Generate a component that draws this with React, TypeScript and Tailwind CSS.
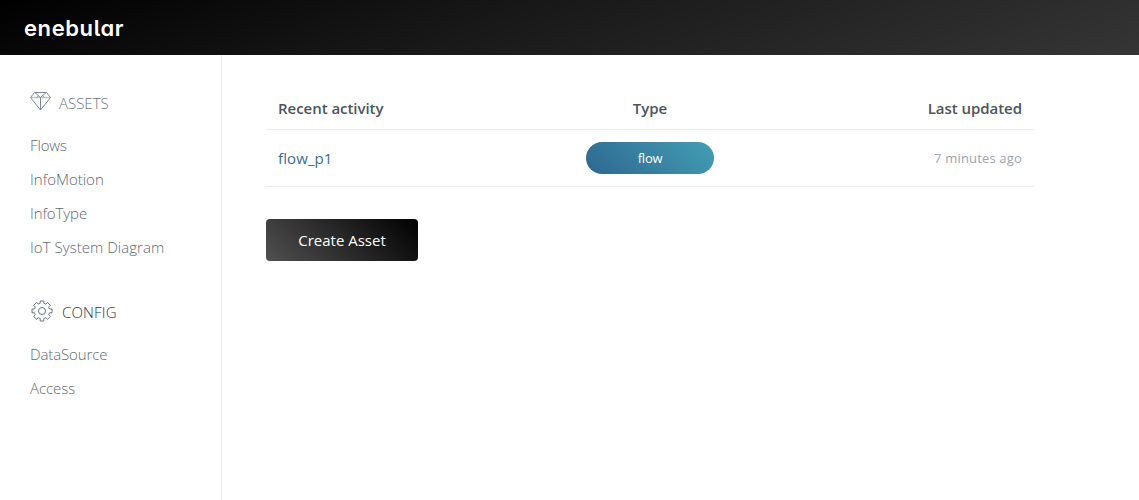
import type { ReactNode } from 'react';

type NavItem = { label: string; spacing: string };

const assetItems: NavItem[] = [
  { label: 'Flows', spacing: 'tracking-[-0.15px]' },
  { label: 'InfoMotion', spacing: 'tracking-[0px]' },
  { label: 'InfoType', spacing: 'tracking-[-0.1px]' },
  { label: 'IoT System Diagram', spacing: 'tracking-[0.04px]' },
];

const configItems: NavItem[] = [
  { label: 'DataSource', spacing: 'tracking-[-0.13px]' },
  { label: 'Access', spacing: 'tracking-[-0.07px]' },
];

function DiamondIcon() {
  return (
    <svg width="21" height="20" viewBox="0 0 21 20" fill="none" stroke="#7d8794" strokeWidth="1" strokeLinejoin="round">
      <path d="M.5 6.500h20" stroke="#bcc0c8" strokeWidth="1.400" />
      <path d="M4.500 1.500h12l4 5-10 12.500L.5 6.500z" />
      <path d="M4.800 1.500l5.700 5 5.700-5M10.500 6.500V19" />
      <path d="M6.500 6.500l2-2M14.500 6.500l-2-2" strokeWidth="0.7" />
    </svg>
  );
}

function GearIcon() {
  return (
    <svg width="22" height="22" viewBox="0 0 22 22" fill="none" stroke="#5b6675" strokeWidth="0.9" strokeLinejoin="round">
      <circle cx="11" cy="11" r="3.500" />
      <path d="M9.200 1h3.600v2.300l2 .8 1.700-1.600 2.800 2.800-1.600 1.700.8 2H21v3.800h-2.500l-.8 2 1.600 1.700-2.800 2.800-1.700-1.600-2 .8V21H9.200v-2.500l-2-.8-1.700 1.600-2.800-2.800 1.600-1.700-.8-2H1V9h2.500l.8-2-1.600-1.700 2.800-2.800 1.700 1.600 2-.8z" />
    </svg>
  );
}

function NavList({ items }: { items: NavItem[] }) {
  return (
    <ul className="text-[15px] font-light text-[#5f6873]">
      {items.map((item) => (
        <li key={item.label} className={`flex h-[34px] items-center whitespace-nowrap ${item.spacing}`}>
          {item.label}
        </li>
      ))}
    </ul>
  );
}

function NavHeading({ icon, children }: { icon: ReactNode; children: ReactNode }) {
  return <h2 className="flex h-6 items-center text-[15px] font-light">{icon}{children}</h2>;
}

export default function App() {
  return (
    <div className="flex h-[500px] flex-col overflow-hidden bg-white font-['Open_Sans','Noto_Sans',sans-serif]">
      <header className="flex h-[55px] shrink-0 items-center bg-[linear-gradient(160deg,#000,#141414_35%,#353535)] pl-6">
        <span className="pt-px font-['Inter',sans-serif] text-[22px] leading-none font-semibold tracking-[0.6px] text-white [font-feature-settings:'cv11','cv05']">
          enebular
        </span>
      </header>
      <div className="flex flex-1">
        <nav className="w-[222px] shrink-0 border-r border-[#ececec] pt-[34px] pl-[30px]">
          <NavHeading icon={<DiamondIcon />}>
            <span className="pt-1 pl-2 text-[#6c7580]">ASSETS</span>
          </NavHeading>
          <div className="pt-[15px]">
            <NavList items={assetItems} />
          </div>
          <div className="pt-[34px]">
            <NavHeading icon={<span className="pt-px pl-px"><GearIcon /></span>}>
              <span className="pt-1 pl-[9px] tracking-[0.15px] text-[#2b3440]">CONFIG</span>
            </NavHeading>
          </div>
          <div className="pt-[15px]">
            <NavList items={configItems} />
          </div>
        </nav>
        <main className="pt-8 pl-11">
          <div className="w-[768px]">
            <div className="grid h-[43px] grid-cols-3 items-center border-b border-[#ececec] px-3 text-[15px] font-semibold tracking-[-0.04px] text-[#4b5560]">
              <span>Recent activity</span>
              <span className="text-center">Type</span>
              <span className="text-right">Last updated</span>
            </div>
            <div className="grid h-[57px] grid-cols-3 items-center border-b border-[#ececec] px-3">
              <a className="text-[15px] tracking-[0.1px] text-[#3a6e95]">flow_p1</a>
              <span className="flex h-8 w-32 items-center justify-center justify-self-center rounded-full bg-[linear-gradient(45deg,#2f6690,#429fb4)] pt-px text-[13px] tracking-[-0.2px] text-white">
                flow
              </span>
              <span className="pt-px text-right text-[13px] tracking-[0.17px] text-[#9aa5b1]">7 minutes ago</span>
            </div>
          </div>
          <button className="mt-8 flex h-[42px] w-[152px] items-center justify-center rounded bg-[linear-gradient(45deg,#505050,#000)] text-[15px] text-white">
            Create Asset
          </button>
        </main>
      </div>
    </div>
  );
}
